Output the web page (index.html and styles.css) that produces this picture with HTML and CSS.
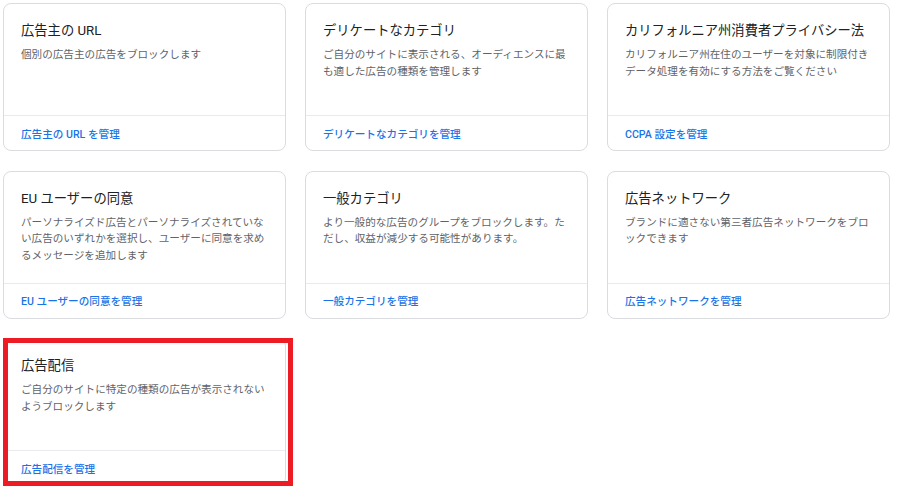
FILE: index.html
```html
<!DOCTYPE html>
<html lang="ja">
<head>
<meta charset="utf-8">
<title>ブロックのコントロール</title>
<link rel="stylesheet" href="styles.css">
</head>
<body>
<div class="grid">
  <div class="card">
    <div class="card-body">
      <h2 class="card-title">広告主の URL</h2>
      <p class="card-desc">個別の広告主の広告をブロックします</p>
    </div>
    <div class="card-footer"><a class="card-link" href="#">広告主の URL を管理</a></div>
  </div>
  <div class="card">
    <div class="card-body">
      <h2 class="card-title">デリケートなカテゴリ</h2>
      <p class="card-desc">ご自分のサイトに表示される、オーディエンスに最も適した広告の種類を管理します</p>
    </div>
    <div class="card-footer"><a class="card-link" href="#">デリケートなカテゴリを管理</a></div>
  </div>
  <div class="card">
    <div class="card-body">
      <h2 class="card-title">カリフォルニア州消費者プライバシー法</h2>
      <p class="card-desc">カリフォルニア州在住のユーザーを対象に制限付きデータ処理を有効にする方法をご覧ください</p>
    </div>
    <div class="card-footer"><a class="card-link" href="#">CCPA 設定を管理</a></div>
  </div>
  <div class="card">
    <div class="card-body">
      <h2 class="card-title">EU ユーザーの同意</h2>
      <p class="card-desc">パーソナライズド広告とパーソナライズされていない広告のいずれかを選択し、ユーザーに同意を求めるメッセージを追加します</p>
    </div>
    <div class="card-footer"><a class="card-link" href="#">EU ユーザーの同意を管理</a></div>
  </div>
  <div class="card">
    <div class="card-body">
      <h2 class="card-title">一般カテゴリ</h2>
      <p class="card-desc">より一般的な広告のグループをブロックします。ただし、収益が減少する可能性があります。</p>
    </div>
    <div class="card-footer"><a class="card-link" href="#">一般カテゴリを管理</a></div>
  </div>
  <div class="card">
    <div class="card-body">
      <h2 class="card-title">広告ネットワーク</h2>
      <p class="card-desc">ブランドに適さない第三者広告ネットワークをブロックできます</p>
    </div>
    <div class="card-footer"><a class="card-link" href="#">広告ネットワークを管理</a></div>
  </div>
  <div class="card highlighted">
    <div class="card-body">
      <h2 class="card-title">広告配信</h2>
      <p class="card-desc">ご自分のサイトに特定の種類の広告が表示されないようブロックします</p>
    </div>
    <div class="card-footer"><a class="card-link" href="#">広告配信を管理</a></div>
    <div class="highlight-box"></div>
  </div>
</div>
</body>
</html>
```

FILE: styles.css
```css
html, body {
  margin: 0;
  padding: 0;
  background: #ffffff;
}

body {
  font-family: Roboto, "Noto Sans CJK JP", "Noto Sans", sans-serif;
  color: #202124;
  padding: 3px;
}

.grid {
  display: grid;
  grid-template-columns: repeat(3, 283px);
  grid-auto-rows: 148px;
  column-gap: 19px;
  row-gap: 19.5px;
}

.card {
  position: relative;
  box-sizing: border-box;
  display: flex;
  flex-direction: column;
  border: 1px solid #dadce0;
  border-radius: 8px;
  background: #ffffff;
}

.card-body {
  flex: 1;
  padding: 17px 18px 0 17px;
}

.card-title {
  margin: 0;
  font-size: 13.3px;
  line-height: 20px;
  font-weight: 400;
  color: #202124;
  white-space: nowrap;
}

.card-desc {
  margin: 6px 0 0;
  font-size: 10.6px;
  line-height: 16.6px;
  color: #5f6368;
  line-break: loose;
}

.card-footer {
  height: 34px;
  border-top: 1px solid #e8eaed;
  display: flex;
  align-items: center;
  padding: 0 17px;
}

.card-link {
  font-size: 10.6px;
  font-weight: 500;
  color: #1a73e8;
  text-decoration: none;
}

.highlight-box {
  position: absolute;
  left: -1px;
  top: -1px;
  right: -8px;
  bottom: -1px;
  border: 5px solid #ed1c24;
  pointer-events: none;
}
```
